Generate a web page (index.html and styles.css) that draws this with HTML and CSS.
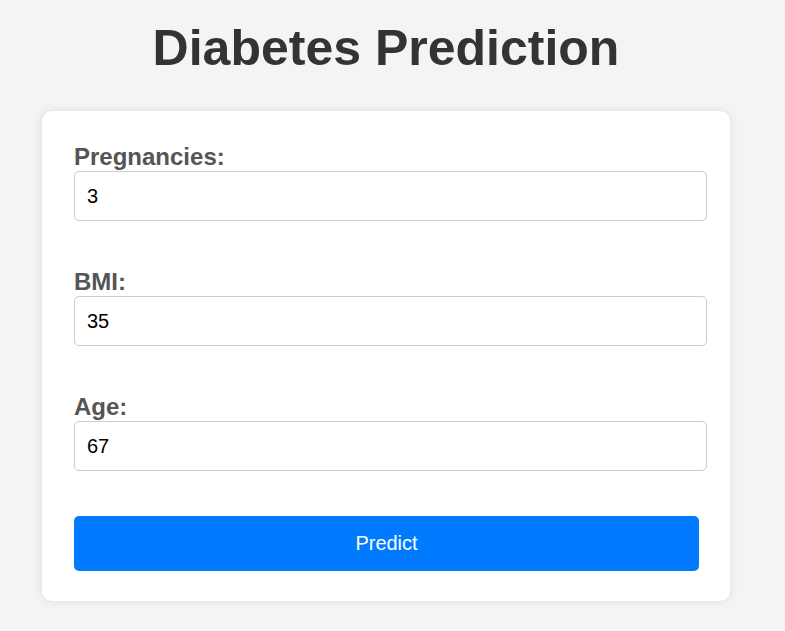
FILE: index.html
```html
<!DOCTYPE html>
<html lang="en">
<head>
<meta charset="utf-8">
<title>Diabetes Prediction</title>
<link rel="stylesheet" href="styles.css">
</head>
<body>
<div class="page">
  <h1 class="title">Diabetes Prediction</h1>
  <form class="card">
    <div class="field">
      <label class="label" for="preg">Pregnancies:</label>
      <input class="input" id="preg" type="text" value="3">
    </div>
    <div class="field">
      <label class="label" for="bmi">BMI:</label>
      <input class="input" id="bmi" type="text" value="35">
    </div>
    <div class="field">
      <label class="label" for="age">Age:</label>
      <input class="input" id="age" type="text" value="67">
    </div>
    <button class="button" type="button">Predict</button>
  </form>
</div>
</body>
</html>
```
FILE: styles.css
```css
html, body {
  margin: 0;
  padding: 0;
  background: #f4f4f4;
  font-family: "Liberation Sans", Arial, sans-serif;
}

.page {
  width: 772px;
  display: flex;
  flex-direction: column;
  align-items: center;
  padding-top: 20px;
  padding-bottom: 30px;
}

.title {
  margin: 0 0 33.5px;
  font-size: 50px;
  font-weight: bold;
  line-height: 57.5px;
  color: #333;
  text-align: center;
}

.card {
  box-sizing: border-box;
  width: 688px;
  background: #fff;
  border-radius: 10px;
  box-shadow: 0 0 10px rgba(0, 0, 0, 0.1);
  padding: 31px 31px 30px 32px;
  display: flex;
  flex-direction: column;
}

.field {
  display: flex;
  flex-direction: column;
  margin-bottom: 46px;
}

.field:nth-child(3) {
  margin-bottom: 45px;
}

.label {
  font-size: 24px;
  font-weight: bold;
  line-height: 29px;
  color: #555;
}

.input {
  box-sizing: border-box;
  width: calc(100% + 8px);
  height: 50px;
  margin: 0;
  padding: 0 12px;
  border: 1px solid #ccc;
  border-radius: 5px;
  font-family: "Liberation Sans", Arial, sans-serif;
  font-size: 20px;
  color: #000;
  background: #fff;
  outline: none;
}

.button {
  box-sizing: border-box;
  width: 100%;
  height: 55px;
  margin: 0;
  border: none;
  border-radius: 5px;
  background: #007bff;
  color: #fff;
  font-family: "Liberation Sans", Arial, sans-serif;
  font-size: 20px;
  cursor: pointer;
}
```
